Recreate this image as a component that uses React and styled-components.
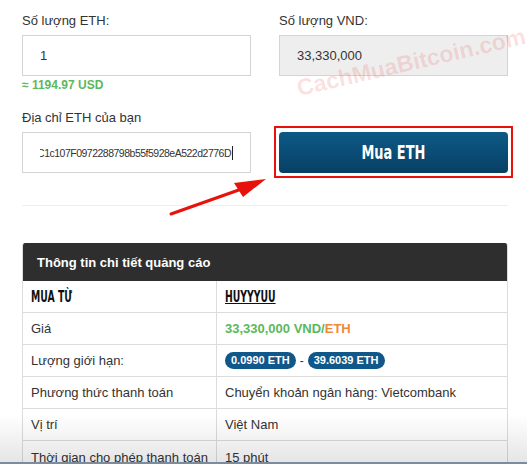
import React from "react";
import styled, { createGlobalStyle } from "styled-components";

const GlobalStyle = createGlobalStyle`
  body {
    margin: 0;
    background: #fff;
    font-family: "Liberation Sans", Arial, sans-serif;
    color: #333;
  }
`;

const Page = styled.div`
  position: relative;
  width: 527px;
  height: 464px;
  overflow: hidden;
  padding: 13px 19px 0 22px;
  box-sizing: border-box;
`;

const FormGrid = styled.div`
  display: grid;
  grid-template-columns: 229px 229px;
  column-gap: 28px;
`;

const Column = styled.div`
  display: flex;
  flex-direction: column;
`;

const Label = styled.div`
  font-size: 13px;
  line-height: 15px;
  color: #333;
  margin-bottom: 7px;
  margin-top: ${(p) => p.$top || 0}px;
`;

const Field = styled.div`
  height: 41px;
  box-sizing: border-box;
  border: 1px solid #d4d4d4;
  background: ${(p) => (p.$readonly ? "#eeeeee" : "#fff")};
  display: flex;
  align-items: center;
  padding: 0 17px;
  font-size: 13px;
  color: #333;
  white-space: nowrap;
`;

const Scroller = styled.div`
  flex: 1;
  display: flex;
  justify-content: flex-end;
  align-items: center;
  overflow: hidden;
  font-size: 10.5px;
  letter-spacing: -0.5px;
`;

const Caret = styled.span`
  flex: none;
  display: inline-block;
  width: 1px;
  height: 14px;
  background: #222;
  margin-left: 1px;
`;

const Hint = styled.div`
  font-size: 12px;
  font-weight: bold;
  color: #5cb85c;
  margin-top: 2px;
  line-height: 14px;
`;

const Highlight = styled.div`
  margin: 50px -5px 0;
  border: 2px solid #e8120c;
  padding: 4px 3px 3px;
`;

const BuyButton = styled.button`
  width: 100%;
  height: 41px;
  border: none;
  border-radius: 4px;
  background: linear-gradient(#0d5a86, #0a4a72 60%, #083f63);
  color: #fff;
  cursor: pointer;
  display: flex;
  align-items: center;
  justify-content: center;
`;

const Squeeze = styled.span`
  display: inline-block;
  font-family: "DejaVu Sans", sans-serif;
  font-weight: bold;
  font-size: 18px;
  transform: scale(0.72, 1.05);
  white-space: nowrap;
`;

const Rule = styled.hr`
  border: none;
  border-top: 1px solid #eee;
  margin: 27px 0 37px;
`;

const Table = styled.div`
  border: 1px solid #dcdcdc;
  border-top: none;
  border-radius: 3px 3px 0 0;
  overflow: hidden;
`;

const TableHead = styled.div`
  height: 38px;
  background: #2e2e2e;
  color: #fff;
  font-size: 13px;
  font-weight: bold;
  display: flex;
  align-items: center;
  padding-left: 14px;
`;

const Row = styled.div`
  display: grid;
  grid-template-columns: 193px 1fr;
  height: 32px;
  border-bottom: 1px solid #dcdcdc;
  box-sizing: border-box;
  &:last-child {
    border-bottom: none;
  }
`;

const Cell = styled.div`
  display: flex;
  align-items: center;
  padding-left: 8px;
  font-size: 13px;
  color: #333;
  white-space: nowrap;
  border-left: ${(p) => (p.$right ? "1px solid #dcdcdc" : "none")};
`;

const Tag = styled.span`
  display: inline-block;
  font-family: "DejaVu Sans", sans-serif;
  font-weight: bold;
  font-size: 15px;
  color: #111;
  transform: scaleX(0.62);
  transform-origin: left center;
  text-decoration: ${(p) => (p.$link ? "underline" : "none")};
`;

const Price = styled.span`
  font-weight: bold;
  color: ${(p) => p.$color};
`;

const Badge = styled.span`
  background: #10588a;
  color: #fff;
  font-weight: bold;
  font-size: 11px;
  border-radius: 9px;
  padding: 2px 6px;
  line-height: 13px;
`;

const Dash = styled.span`
  margin: 0 4px;
  font-size: 12px;
`;

const Watermark = styled.div`
  position: absolute;
  left: 300px;
  top: 77px;
  font-family: "Liberation Sans", Arial, sans-serif;
  font-weight: bold;
  font-size: 23px;
  line-height: 23px;
  color: rgba(235, 60, 60, 0.16);
  transform: rotate(-13deg);
  transform-origin: left bottom;
  pointer-events: none;
  white-space: nowrap;
`;

const ArrowSvg = styled.svg`
  position: absolute;
  left: 0;
  top: 0;
  pointer-events: none;
`;

const BottomShade = styled.div`
  position: absolute;
  left: 0;
  right: 0;
  bottom: 0;
  height: 48px;
  background: linear-gradient(rgba(0, 0, 0, 0), rgba(0, 0, 0, 0.1));
  border-bottom: 2px solid #7d8c9c;
  pointer-events: none;
`;

const details = [
  ["Phương thức thanh toán", "Chuyển khoản ngân hàng: Vietcombank"],
  ["Vị trí", "Việt Nam"],
  ["Thời gian cho phép thanh toán", "15 phút"],
];

export default function App() {
  return (
    <>
      <GlobalStyle />
      <Page>
        <FormGrid>
          <Column>
            <Label>Số lượng ETH:</Label>
            <Field>1</Field>
            <Hint>≈ 1194.97 USD</Hint>
            <Label $top={18}>Địa chỉ ETH của bạn</Label>
            <Field>
              <Scroller>
                0x3bC1c107F0972288798b55f5928eA522d2776D
                <Caret />
              </Scroller>
            </Field>
          </Column>
          <Column>
            <Label>Số lượng VND:</Label>
            <Field $readonly>33,330,000</Field>
            <Highlight>
              <BuyButton>
                <Squeeze>Mua ETH</Squeeze>
              </BuyButton>
            </Highlight>
          </Column>
        </FormGrid>
        <Rule />
        <Table>
          <TableHead>Thông tin chi tiết quảng cáo</TableHead>
          <Row>
            <Cell>
              <Tag>MUA TỪ</Tag>
            </Cell>
            <Cell $right>
              <Tag $link>HUYYYUU</Tag>
            </Cell>
          </Row>
          <Row>
            <Cell>Giá</Cell>
            <Cell $right>
              <Price $color="#5cb85c">33,330,000 VND/</Price>
              <Price $color="#f0883a">ETH</Price>
            </Cell>
          </Row>
          <Row>
            <Cell>Lượng giới hạn:</Cell>
            <Cell $right>
              <Badge>0.0990 ETH</Badge>
              <Dash>-</Dash>
              <Badge>39.6039 ETH</Badge>
            </Cell>
          </Row>
          {details.map(([k, v]) => (
            <Row key={k}>
              <Cell>{k}</Cell>
              <Cell $right>{v}</Cell>
            </Row>
          ))}
        </Table>
        <Watermark>CachMuaBitcoin.com</Watermark>
        <ArrowSvg width="527" height="464">
          <line x1="171" y1="214" x2="250" y2="186" stroke="#e8120c" strokeWidth="3" strokeLinecap="round" />
          <polygon points="266,179 234,183 243,197" fill="#e8120c" />
        </ArrowSvg>
        <BottomShade />
      </Page>
    </>
  );
}
